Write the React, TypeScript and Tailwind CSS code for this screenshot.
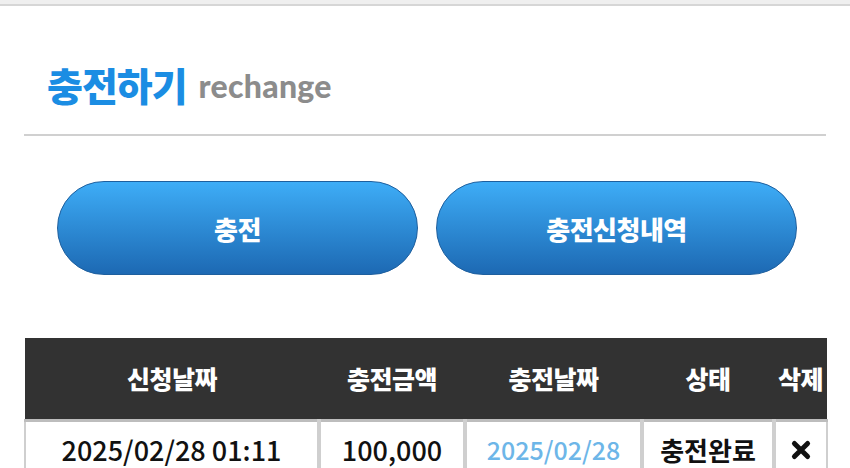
import React from "react";

type Charge = {
  requestedAt: string;
  amount: string;
  chargedAt: string;
  status: string;
};

const rows: Charge[] = [
  {
    requestedAt: "2025/02/28 01:11",
    amount: "100,000",
    chargedAt: "2025/02/28",
    status: "충전완료",
  },
];

const kr = { fontFamily: '"Noto Sans CJK KR", "Noto Sans", sans-serif' };

const cellClass =
  "border-l-[4px] border-[#cfcfcf] text-center align-middle h-[56px] pt-[2px]";

const btnClass =
  "w-[361px] h-[94px] rounded-full border border-[#1e5f9e] bg-gradient-to-b from-[#3eadf7] to-[#1d69b3] text-white text-[26px] font-black tracking-[-0.5px]";

export default function App() {
  return (
    <div className="w-[850px] min-h-[468px] bg-white overflow-hidden" style={kr}>
      {/* top strip */}
      <div className="h-[6px] bg-[#efefef] border-b-[2px] border-[#d6d6d6]" />

      <div className="px-[24px]">
        {/* page title */}
        <div className="flex items-end gap-[12px] pt-[54px] pb-[26px] pl-[23px] border-b-[2px] border-[#d0d0d0]">
          <h1 className="text-[39px] leading-[48px] font-black text-[#1b8de3] tracking-[-1px]">
            충전하기
          </h1>
          <span
            className="text-[32px] leading-[44px] font-black text-[#8c8c8c] tracking-[0.3px]"
            style={{ fontFamily: "Lato, sans-serif" }}
          >
            rechange
          </span>
        </div>

        {/* action buttons */}
        <div className="flex justify-center gap-[18px] pt-[45px] pb-[63px] pl-[4px]">
          <button className={btnClass}>충전</button>
          <button className={btnClass}>충전신청내역</button>
        </div>

        {/* history table */}
        <table className="w-[802px] border-collapse table-fixed">
          <colgroup>
            <col className="w-[294px]" />
            <col className="w-[146px]" />
            <col className="w-[177px]" />
            <col className="w-[132px]" />
            <col className="w-[53px]" />
          </colgroup>
          <thead>
            <tr className="bg-[#323232] text-white text-[25px] font-black h-[82px] border-b-[3px] border-[#bdbdbd]">
              <th className="font-black tracking-[-0.5px]">신청날짜</th>
              <th className="font-black tracking-[-0.5px]">충전금액</th>
              <th className="font-black tracking-[-0.5px]">충전날짜</th>
              <th className="font-black tracking-[-0.5px]">상태</th>
              <th className="font-black tracking-[-0.5px]">삭제</th>
            </tr>
          </thead>
          <tbody>
            {rows.map((r) => (
              <tr key={r.requestedAt} className="text-[27px] font-medium text-[#111]">
                <td className="border-l-[2px] border-[#cfcfcf] text-center h-[56px] pt-[2px]">
                  {r.requestedAt}
                </td>
                <td className={cellClass}>{r.amount}</td>
                <td className={`${cellClass} text-[25px] text-[#6db6e8]`}>{r.chargedAt}</td>
                <td className={`${cellClass} text-[26px] font-bold`}>{r.status}</td>
                <td className={`${cellClass} border-r-[2px]`}>
                  <span className="inline-flex justify-center">
                    <svg width="22" height="22" viewBox="0 0 20 20">
                      <path
                        d="M4 4 L16 16 M16 4 L4 16"
                        stroke="#111"
                        strokeWidth="4.5"
                        strokeLinecap="round"
                      />
                    </svg>
                  </span>
                </td>
              </tr>
            ))}
          </tbody>
        </table>
      </div>
    </div>
  );
}
